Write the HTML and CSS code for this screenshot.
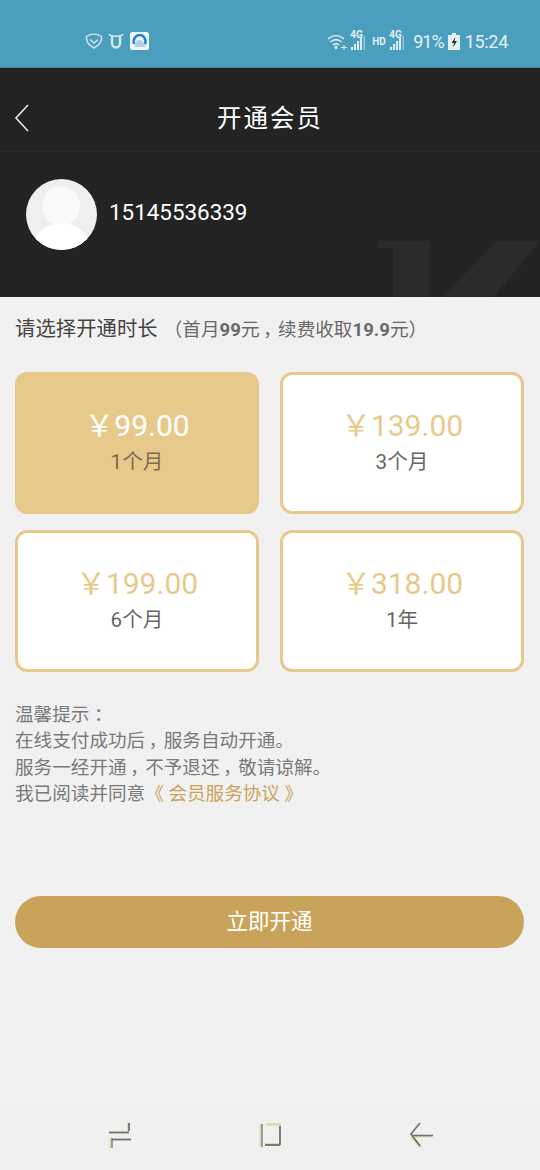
FILE: index.html
```html
<!DOCTYPE html>
<html lang="zh-CN">
<head>
<meta charset="utf-8">
<title>开通会员</title>
<link rel="stylesheet" href="styles.css">
</head>
<body>
<div class="page">
  <div class="status">
    <div class="status-left">
      <svg class="ic" width="18" height="16" viewBox="0 0 18 16" fill="none" stroke="#cfe6ef" stroke-width="1.500"><path d="M1.500 3.500C6 .5 12 .5 16.500 3.500 17 8 14 12.500 9 15 4 12.500 1 8 1.500 3.500Z"/><path d="M5 6.500 9 10l4-3.500"/></svg>
      <svg class="ic" width="16" height="16" viewBox="0 0 16 16" fill="none" stroke="#d6e9f0" stroke-width="2.400"><path d="M4 3v7c0 6 8 6 8 0V3"/><path d="M1 1c1 3 13 3 14 0" stroke-width="1.600"/></svg>
      <svg class="ic app" width="19" height="18" viewBox="0 0 19 18"><rect width="19" height="18" rx="2.500" fill="#f4f8fb"/><path d="M4 12C2.500 6.500 6 3 9.700 3s6.800 3.300 5.500 9.300" fill="none" stroke="#1f86e0" stroke-width="2.600"/><path d="M4.500 15c-.5-4 2.500-7 5-7 2.500 0 5 3 6 7Z" fill="#a9d3ee"/></svg>
    </div>
    <div class="status-right">
      <svg class="ic wifi" width="21" height="17" viewBox="0 0 21 17" fill="none" stroke="#dcedf3" stroke-width="1.500"><path d="M1 6c5-4.500 11-4.500 16 0"/><path d="M3.500 9c3.500-3 7.500-3 11 0"/><path d="M6 12c2-1.500 4-1.500 6 0"/><circle cx="9" cy="14.500" r=".9" fill="#dcedf3"/><path d="M14 14.500h6M17 12v5" stroke-width="1"/></svg>
      <div class="sig"><span class="sig-t">4G</span><svg width="15" height="15" viewBox="0 0 15 15" fill="#dcedf3"><rect x="0" y="12" width="2" height="3"/><rect x="3" y="9" width="2" height="6"/><rect x="6" y="6" width="2" height="9"/><rect x="9" y="3" width="2" height="12"/><rect x="12.500" y="1" width="1.500" height="14" opacity=".5"/></svg></div>
      <span class="hd">HD</span>
      <div class="sig"><span class="sig-t">4G</span><svg width="15" height="15" viewBox="0 0 15 15" fill="#dcedf3"><rect x="0" y="12" width="2" height="3"/><rect x="3" y="9" width="2" height="6"/><rect x="6" y="6" width="2" height="9"/><rect x="9" y="3" width="2" height="12"/><rect x="12.500" y="1" width="1.500" height="14" opacity=".5"/></svg></div>
      <span class="pct">91%</span>
      <svg class="ic batt" width="12" height="17" viewBox="0 0 12 17"><path d="M4 0h4v2h4v15H0V2h4Z" fill="#e4f0f4"/><path d="M7.500 4 3.500 10H6l-1 4.500L9 8H6.500Z" fill="#23343c"/></svg>
      <span class="time">15:24</span>
    </div>
  </div>

  <header class="topbar">
    <svg class="back" width="16" height="30" viewBox="0 0 16 30" fill="none" stroke="#e8e8e8" stroke-width="1.600"><path d="M14 2 2 15l12 13"/></svg>
    <h1 class="title">开通会员</h1>
  </header>

  <section class="profile">
    <svg class="mark" width="161" height="56" viewBox="0 0 161 56" fill="#2b2b2b"><path d="M0 0h50v56H14V7H0Z"/><path d="M118 0h43L114 56H63Z"/></svg>
    <div class="avatar"><span class="head"></span><span class="body-shape"></span></div>
    <div class="phone">15145536339</div>
  </section>

  <main class="content">
    <p class="lead"><span class="lead-main">请选择开通时长</span><span class="lead-sub">（首月<b>99</b>元<span class="cm">，</span>续费收取<b>19.9</b>元）</span></p>

    <div class="plans">
      <div class="plan active"><div class="price">￥99.00</div><div class="dur">1个月</div></div>
      <div class="plan"><div class="price">￥139.00</div><div class="dur">3个月</div></div>
      <div class="plan"><div class="price">￥199.00</div><div class="dur">6个月</div></div>
      <div class="plan"><div class="price">￥318.00</div><div class="dur">1年</div></div>
    </div>

    <div class="notes">
      <div>温馨提示<span class="cm">：</span></div>
      <div>在线支付成功后<span class="cm">，</span>服务自动开通。</div>
      <div>服务一经开通<span class="cm">，</span>不予退还<span class="cm">，</span>敬请谅解。</div>
      <div>我已阅读并同意<a class="link">《 会员服务协议 》</a></div>
    </div>

    <button class="cta">立即开通</button>
  </main>

  <nav class="navbar">
    <svg width="24" height="27" viewBox="0 0 24 27" fill="none" stroke-width="1.800">
      <g stroke="#ddd8b4"><path d="M20 1v8"/><path d="M3 16v10" stroke-width="3"/></g>
      <g stroke="#6f7264"><path d="M21 1v8"/><path d="M1 10.500h20"/><path d="M4 17.500h19"/><path d="M4 16v10" stroke-width="1.200"/></g>
    </svg>
    <svg width="24" height="26" viewBox="0 0 24 26" fill="none" stroke-width="1.800">
      <g stroke="#ddd8b4"><path d="M2 2v23" stroke-width="3"/><path d="M7 2.500h15" stroke-width="2.500"/><path d="M6 22h14"/></g>
      <g stroke="#6f7264"><path d="M3 2v23" stroke-width="1.200"/><path d="M21 4v19"/><path d="M6 23h15"/></g>
    </svg>
    <svg width="24" height="26" viewBox="0 0 24 26" fill="none" stroke-width="1.600">
      <g stroke="#ddd8b4"><path d="M3 15l9 10" stroke-width="3"/><path d="M5 14.500h18"/></g>
      <g stroke="#6f7264"><path d="M11 1 2 12l9 12"/><path d="M4 13.500h20"/></g>
    </svg>
  </nav>
</div>
</body>
</html>
```
FILE: styles.css
```css
* { box-sizing: border-box; }
html, body { margin: 0; padding: 0; }
body {
  font-family: Roboto, "Noto Sans CJK SC", sans-serif;
  background: #f1f1f1;
  color: #555;
}
.page {
  width: 540px;
  height: 1170px;
  display: flex;
  flex-direction: column;
  overflow: hidden;
}
.status {
  height: 68px;
  background: #4a9ebe;
  border-bottom: 1px solid #3f8aa6;
  display: flex;
  align-items: center;
  justify-content: space-between;
  padding: 15px 32px 0 85px;
  color: #e6f1f5;
}
.status-left, .status-right { display: flex; align-items: center; }
.status-left { gap: 5px; }
.app { margin-left: 1px; }
.ic { display: block; flex: none; }
.sig { display: flex; align-items: flex-end; position: relative; width: 18px; height: 17px; justify-content: flex-end; }
.sig-t { position: absolute; left: 2px; top: -3px; font-size: 10px; font-weight: 700; color: #e6f1f5; line-height: 10px; }
.hd { font-size: 10px; font-weight: 700; margin: 0 1px 0 6px; width: 14px; }
.pct { font-size: 18px; letter-spacing: -1px; margin-left: 8px; }
.batt { margin-left: 4px; }
.time { font-size: 18px; letter-spacing: -.3px; margin-left: 5px; }

.topbar {
  height: 84px;
  padding-top: 14px;
  background: #232323;
  border-bottom: 1px solid #2a2a2a;
  display: flex;
  align-items: center;
  justify-content: center;
  position: relative;
}
.back { position: absolute; left: 14px; top: 35px; }
.title {
  margin: 0;
  font-size: 24.500px;
  font-weight: 400;
  letter-spacing: 2px;
  color: #fff;
}
.profile {
  height: 145px;
  background: #232323;
  display: flex;
  align-items: flex-start;
  padding: 27px 0 0 26px;
  gap: 12px;
  position: relative;
  overflow: hidden;
}
.mark { position: absolute; left: 379px; top: 89px; }
.avatar {
  width: 71px;
  height: 71px;
  border-radius: 50%;
  background: #efefef;
  position: relative;
  overflow: hidden;
  flex: none;
}
.head {
  position: absolute;
  left: 16px;
  top: 7px;
  width: 38px;
  height: 40px;
  border-radius: 50%;
  background: #fafafa;
}
.body-shape {
  position: absolute;
  left: 7px;
  top: 44px;
  width: 57px;
  height: 50px;
  border-radius: 50%;
  background: #fff;
}
.phone { font-size: 22.400px; color: #fff; line-height: 26px; margin-top: 20px; }

.content { flex: 1; padding: 0 15px; }
.lead { margin: 0; height: 75px; padding-top: 18px; display: flex; align-items: baseline; line-height: 28px; }
.lead-main { font-size: 20.400px; color: #444; }
.lead-sub { font-size: 18.600px; color: #6a6a6a; margin-left: 6px; }
.lead-sub b { font-weight: 700; }
.cm { display: inline-block; width: 1em; text-align: center; font-feature-settings: "palt"; }

.plans {
  display: grid;
  grid-template-columns: 244px 244px;
  grid-auto-rows: 142px;
  column-gap: 21px;
  row-gap: 16px;
}
.plan {
  border: 3px solid #e8c98c;
  border-radius: 12px;
  background: #fff;
  display: flex;
  flex-direction: column;
  align-items: center;
  padding-top: 33px;
}
.plan.active { background: #e8c98c; }
.price {
  font-size: 30px;
  line-height: 36px;
  color: #e8c98c;
}
.plan.active .price { color: #fff; }
.dur { font-size: 20.600px; line-height: 26px; margin-top: 5px; color: #666; }
.plan.active .dur { color: #7a6d52; }

.notes {
  margin-top: 30px;
  font-size: 18.600px;
  line-height: 26.400px;
  color: #7a7a7a;
}
.link { color: #c9a45c; }

.cta {
  display: block;
  width: 509px;
  height: 52px;
  margin-top: 88px;
  padding: 0 0 4px;
  border: 0;
  border-radius: 26px;
  background: #c9a35a;
  color: #fff;
  font-family: inherit;
  font-size: 21.500px;
}
.navbar {
  height: 64px;
  background: #f0f0f0;
  display: flex;
  align-items: center;
  justify-content: space-between;
  padding: 0 107px 6px 108px;
}
```
